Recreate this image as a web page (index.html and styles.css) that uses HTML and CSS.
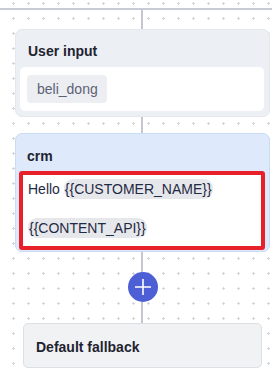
FILE: index.html
```html
<!DOCTYPE html>
<html>
<head>
<meta charset="utf-8">
<link rel="stylesheet" href="styles.css">
</head>
<body>
<div class="canvas">
  <svg class="grid" width="272" height="373" aria-hidden="true">
    <defs>
      <pattern id="dots" patternUnits="userSpaceOnUse" x="0" y="0" width="15" height="15">
        <rect x="12" y="3" width="3" height="1" fill="#d3d5da"/>
        <rect x="13" y="2" width="1" height="3" fill="#d3d5da"/>
      </pattern>
    </defs>
    <rect width="272" height="373" fill="url(#dots)"/>
  </svg>
  <div class="top-line"></div>
  <div class="flow">
    <div class="connector c1"></div>
    <div class="card user">
      <div class="card-title">User input</div>
      <div class="card-body">
        <span class="chip">beli_dong</span>
      </div>
    </div>
    <div class="connector c2"></div>
    <div class="card crm">
      <div class="card-title">crm</div>
      <div class="message">
        <p>Hello <span class="var">{{CUSTOMER_NAME}}</span></p>
        <p>&nbsp;</p>
        <p><span class="var">{{CONTENT_API}}</span></p>
      </div>
    </div>
    <div class="add-row">
      <div class="connector c3"></div>
      <button class="add-btn" aria-label="Add">
        <svg width="30" height="30" viewBox="0 0 30 30">
          <path d="M15 7v16M7 15h16" stroke="#fff" stroke-width="1.6" fill="none"/>
        </svg>
      </button>
      <div class="connector c4"></div>
    </div>
    <div class="card fallback">
      <div class="fallback-title">Default fallback</div>
    </div>
  </div>
</div>
</body>
</html>
```
FILE: styles.css
```css
* { box-sizing: border-box; }
html, body { margin: 0; padding: 0; background: #fff; }
body {
  font-family: "Liberation Sans", Arial, sans-serif;
  color: #1f2330;
}
.canvas {
  position: relative;
  width: 272px;
  height: 373px;
  overflow: hidden;
}
.grid {
  position: absolute;
  left: 0;
  top: 0;
}
.top-line {
  position: absolute;
  left: 0;
  top: 8px;
  width: 272px;
  height: 2px;
  background: #c8cad5;
}
.flow {
  position: relative;
  display: flex;
  flex-direction: column;
  margin-left: 15px;
  width: 255px;
  padding-top: 10px;
}
.connector {
  width: 2px;
  margin-left: 126px;
  background: #c4c6d1;
}
.c1 { height: 19px; }
.c2 { height: 16px; }
.card {
  border-radius: 7px;
}
.user {
  height: 88px;
  background: #eceff3;
  border: 1px solid #e4e7ec;
  padding: 0 5px 5px 4px;
  display: flex;
  flex-direction: column;
}
.card-title {
  font-weight: bold;
  font-size: 14px;
  height: 37px;
  line-height: 16px;
  padding: 13px 0 0 8px;
}
.card-body {
  flex: 1;
  background: #fff;
  border-radius: 5px;
  padding: 8px 7px;
  display: flex;
  align-items: flex-start;
}
.chip {
  display: inline-block;
  height: 28px;
  line-height: 28px;
  padding: 0 9px 0 10px;
  background: #eceef2;
  border-radius: 4px;
  font-size: 14px;
  color: #5b6275;
}
.crm {
  height: 119px;
  background: #deeafb;
  border: 1px solid #c9dcf6;
  padding: 0 4px 1px 3px;
  display: flex;
  flex-direction: column;
}
.crm .card-title {
  padding-top: 14px;
}
.message {
  flex: 1;
  background: #fff;
  border: 4px solid #e8202a;
  border-radius: 3px;
  padding: 5px 5px;
  font-size: 14px;
  color: #1f2a44;
}
.message p {
  margin: 0;
  line-height: 19.5px;
}
.var {
  background: #e6e7eb;
  border-radius: 9px;
  padding: 2px 1px;
}
.add-row {
  display: flex;
  flex-direction: column;
  height: 71px;
}
.c3 { height: 20px; }
.c4 { flex: 1; }
.add-btn {
  width: 30px;
  height: 30px;
  margin-left: 113px;
  padding: 0;
  border: none;
  border-radius: 50%;
  background: #4c5fd5;
  display: block;
}
.add-btn svg { display: block; }
.fallback {
  margin: 0 8px;
  height: 45px;
  background: #f1f2f4;
  border: 1px solid #dcdfe4;
  border-radius: 5px;
  display: flex;
  align-items: center;
}
.fallback-title {
  font-weight: bold;
  font-size: 14px;
  padding-left: 12px;
  padding-top: 2px;
}
```
